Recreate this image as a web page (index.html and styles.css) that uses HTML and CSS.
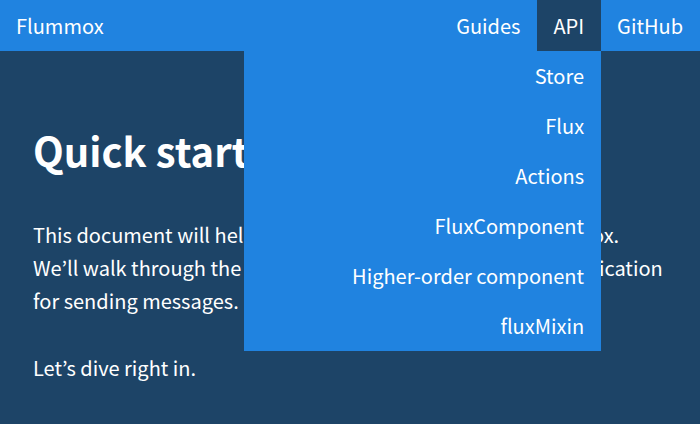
FILE: index.html
```html
<!DOCTYPE html>
<html lang="en">
<head>
<meta charset="utf-8">
<title>Flummox</title>
<link rel="stylesheet" href="styles.css">
</head>
<body>
<header class="bar">
  <a class="link" href="#">Flummox</a>
  <nav class="nav">
    <a class="link" href="#">Guides</a>
    <div class="group">
      <a class="link link-open" href="#">API</a>
      <div class="menu">
        <a class="link menu-link" href="#">Store</a>
        <a class="link menu-link" href="#">Flux</a>
        <a class="link menu-link" href="#">Actions</a>
        <a class="link menu-link" href="#">FluxComponent</a>
        <a class="link menu-link" href="#">Higher-order component</a>
        <a class="link menu-link" href="#">fluxMixin</a>
      </div>
    </div>
    <a class="link" href="#">GitHub</a>
  </nav>
</header>
<main class="doc">
  <h1 class="title">Quick start</h1>
  <p class="text">This document will help you get up and running with Flummox. We’ll walk through the process of creating a sample Flux application for sending messages.</p>
  <p class="text">Let’s dive right in.</p>
</main>
</body>
</html>
```
FILE: styles.css
```css
* {
  box-sizing: border-box;
}

body {
  margin: 0;
  background: #1d4467;
  color: #fff;
  font-family: "Noto Sans CJK KR", "Noto Sans", sans-serif;
  font-size: 20px;
  line-height: 33px;
}

.bar {
  display: flex;
  justify-content: space-between;
  background: #2083e0;
}

.nav {
  display: flex;
}

.link {
  display: block;
  padding: 0 17px 0 16px;
  color: #fff;
  line-height: 51px;
  text-decoration: none;
  white-space: nowrap;
}

.group {
  position: relative;
}

.link-open {
  background: #1d4467;
}

.menu {
  position: absolute;
  top: 100%;
  right: 0;
  min-width: 357px;
  background: #2083e0;
  text-align: right;
}

.menu-link {
  line-height: 50px;
}

.doc {
  padding: 66px 33px 0;
}

.title {
  margin: 0 0 34px;
  font-size: 40px;
  line-height: 67px;
}

.text {
  margin: 0 0 34px;
}
```
